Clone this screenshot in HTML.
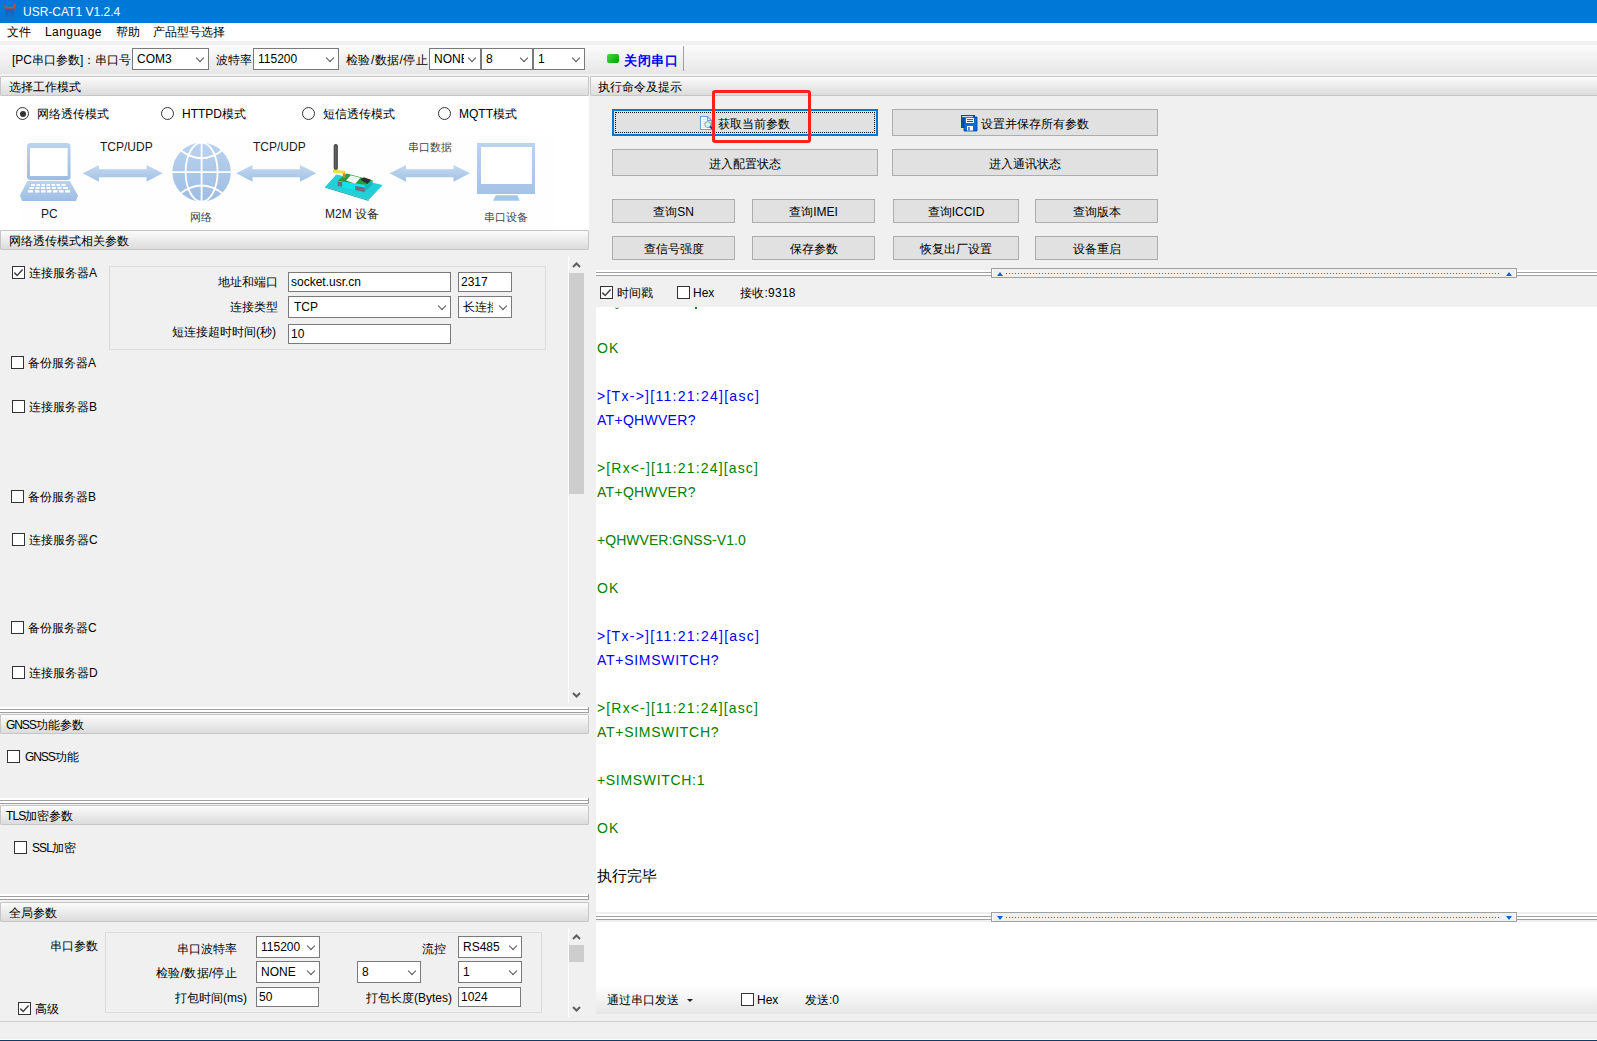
<!DOCTYPE html>
<html><head><meta charset="utf-8">
<style>
*,*::before,*::after{box-sizing:border-box;margin:0;padding:0}
html,body{width:1597px;height:1041px;overflow:hidden;background:#f0f0f0;font-family:"Liberation Sans",sans-serif;font-size:12px;color:#000}
.a{position:absolute}
.t{position:absolute;white-space:nowrap;line-height:1}
.hdr{position:absolute;height:20px;border:1px solid #c6c6c6;border-radius:1px;background:linear-gradient(#fbfbfb,#dcdcdc)}
.hdr span{position:absolute;top:3px;white-space:nowrap;line-height:14px}
.cb{position:absolute;width:13px;height:13px;border:1px solid #333;background:#fff}
.cb svg{position:absolute;left:0;top:0}
.rd{position:absolute;width:13px;height:13px;border:1px solid #333;border-radius:50%;background:#fff}
.rd.on::after{content:"";position:absolute;left:2.5px;top:2.5px;width:6px;height:6px;border-radius:50%;background:#333}
.cmb{position:absolute;border:1px solid #7a7a7a;background:#fff;height:22px}
.cmb span{position:absolute;left:4px;top:4px;line-height:13px;white-space:nowrap}
.cmb i{position:absolute;right:5px;top:6px;width:6px;height:6px;border:solid #555;border-width:0 1px 1px 0;transform:rotate(45deg)}
.ed{position:absolute;border:1px solid #7a7a7a;background:#fff;height:20px}
.ed span{position:absolute;left:2px;top:3px;line-height:13px;white-space:nowrap}
.btn{position:absolute;background:#e1e1e1;border:1px solid #adadad;text-align:center}
.btn span{position:absolute;left:0;right:0;top:50%;margin-top:-6px;line-height:14px;white-space:nowrap}
.spl{position:absolute;height:6px;background:#fff}
.spl::before{content:"";position:absolute;left:0;right:0;top:2px;height:4px;border-top:1px solid #a0a0a0;border-bottom:1px solid #a0a0a0}
.sbox{position:absolute;height:10px;border:1px solid #a0a0a0;background:#f0f0f0;box-shadow:inset 1px 0 0 #fff,inset -1px 0 0 #fff}
.sbox b{position:absolute;left:14px;right:17px;top:4px;height:1px;background:linear-gradient(90deg,#0a78d7 1px,transparent 1px) 0 0/3px 1px repeat-x}
.sarr{position:absolute;width:0;height:0;border-left:3px solid transparent;border-right:3px solid transparent}
.sarr.up{border-bottom:4px solid #0a64d0}.sarr.dn{border-top:4px solid #0a64d0}
.rx{position:absolute;font-size:14px;line-height:16px;white-space:nowrap}
.bl{color:#0000ff}.gr{color:#008000}
</style></head><body>
<!-- title bar -->
<div class="a" style="left:0;top:0;width:1597px;height:23px;background:#0078d7"></div>
<div class="t" style="left:23px;top:6px;color:#fff;font-size:12px">USR-CAT1 V1.2.4</div>
<svg class="a" style="left:0;top:0" width="20" height="22"><path d="M4.3 4.3 L5.5 4.3 L6 6.8 L13.5 6.8 L14 4.3 L15.7 4.3 L15 8.8 L5 8.8 Z" fill="#d94530"/><path d="M5 8.8 L15 8.8 L13.5 17 L12 17 L11.5 12 L10.7 12 L10.3 17 L9.3 17 L9 12 L8.3 12 L8 17 L6.5 17 Z" fill="#2a5db0" opacity="0.85"/></svg>
<!-- menu bar -->
<div class="a" style="left:0;top:23px;width:1597px;height:18px;background:#fff"></div>
<div class="t" style="left:7px;top:26px">文件</div>
<div class="t" style="left:45px;top:26px;letter-spacing:0.45px">Language</div>
<div class="t" style="left:116px;top:26px">帮助</div>
<div class="t" style="left:153px;top:26px">产品型号选择</div>
<!-- toolbar -->
<div class="a" style="left:0;top:45px;width:1597px;height:29px;background:linear-gradient(#fcfcfc,#e6e6e6)"></div>
<div class="a" style="left:0;top:74px;width:1597px;height:2px;background:#f2f2f2"></div>


<div class="t" style="left:12px;top:54px">[PC串口参数]：串口号</div>
<div class="cmb" style="left:132px;top:48px;width:77px"><span>COM3</span><i></i></div>
<div class="t" style="left:216px;top:54px">波特率</div>
<div class="cmb" style="left:253px;top:48px;width:86px"><span>115200</span><i></i></div>
<div class="t" style="left:346px;top:54px;letter-spacing:0.45px">检验/数据/停止</div>
<div class="cmb" style="left:429px;top:48px;width:52px"><span style="width:30px;overflow:hidden">NONE</span><i></i></div>
<div class="cmb" style="left:481px;top:48px;width:52px"><span>8</span><i></i></div>
<div class="cmb" style="left:533px;top:48px;width:52px"><span>1</span><i></i></div>
<div class="a" style="left:607px;top:54px;width:12px;height:9px;border-radius:2px;background:linear-gradient(135deg,#40e040,#00a000)"></div>
<div class="t" style="left:624px;top:54px;color:#0000ff;font-weight:bold;font-size:13px;letter-spacing:0.6px">关闭串口</div>
<div class="a" style="left:683px;top:46px;width:1px;height:25px;background:#a0a0a0"></div>

<!-- LEFT PANEL -->
<div class="hdr" style="left:0px;top:76px;width:589px"><span style="left:8px">选择工作模式</span></div>
<div class="a" style="left:0;top:96px;width:589px;height:134px;background:#fff"></div>
<div class="rd on" style="left:16px;top:107px"></div><div class="t" style="left:37px;top:108px">网络透传模式</div>
<div class="rd" style="left:161px;top:107px"></div><div class="t" style="left:182px;top:108px">HTTPD模式</div>
<div class="rd" style="left:302px;top:107px"></div><div class="t" style="left:323px;top:108px">短信透传模式</div>
<div class="rd" style="left:438px;top:107px"></div><div class="t" style="left:459px;top:108px">MQTT模式</div>


<svg class="a" style="left:0;top:96px" width="588" height="134" viewBox="0 96 588 134">
<defs>
<linearGradient id="bg1" x1="0" y1="0" x2="0" y2="1"><stop offset="0" stop-color="#bad3ee"/><stop offset="1" stop-color="#9dbde3"/></linearGradient>
<linearGradient id="bga" x1="0" y1="0" x2="0" y2="1"><stop offset="0" stop-color="#c2d8f0"/><stop offset="1" stop-color="#a3c2e6"/></linearGradient>
</defs>
<rect x="20" y="136" width="534" height="94" fill="#fefefe"/>
<!-- laptop -->
<rect x="27" y="143" width="43.5" height="37" rx="3.5" fill="url(#bg1)"/>
<rect x="30" y="148" width="37.6" height="28" fill="#fff"/>
<path d="M27.4 181 L69.9 181 L78 195.5 L76 201 L22.2 201 L19.9 195.5 Z" fill="url(#bg1)"/>
<rect x="37" y="180.2" width="23" height="1" fill="#e8f0fa"/>
<g fill="#fff">
<rect x="31" y="184" width="4" height="2"/><rect x="36.5" y="184" width="3.5" height="2"/><rect x="41.5" y="184" width="3.5" height="2"/><rect x="46.5" y="184" width="3.5" height="2"/><rect x="51.5" y="184" width="3.5" height="2"/><rect x="56.5" y="184" width="3.5" height="2"/><rect x="61.5" y="184" width="4" height="2"/>
<rect x="29.5" y="187" width="4.5" height="2"/><rect x="35.5" y="187" width="4" height="2"/><rect x="41" y="187" width="4" height="2"/><rect x="46.5" y="187" width="4" height="2"/><rect x="52" y="187" width="4" height="2"/><rect x="57.5" y="187" width="4" height="2"/><rect x="63" y="187" width="5" height="2"/>
<rect x="28" y="190.2" width="5" height="2.3"/><rect x="35" y="190.2" width="4.5" height="2.3"/><rect x="41" y="190.2" width="4.5" height="2.3"/><rect x="47" y="190.2" width="4.5" height="2.3"/><rect x="53" y="190.2" width="4.5" height="2.3"/><rect x="59" y="190.2" width="4.5" height="2.3"/><rect x="65" y="190.2" width="5" height="2.3"/>
</g>
<!-- arrows -->
<path id="arr" d="M82.7 173.3 L99 165 L99 169.2 L146.5 169.2 L146.5 165 L162.6 173.3 L146.5 181.7 L146.5 177.2 L99 177.2 L99 181.7 Z" fill="url(#bga)"/>
<path d="M236.2 173.3 L252.5 165 L252.5 169.2 L300 169.2 L300 165 L316.3 173.3 L300 181.7 L300 177.2 L252.5 177.2 L252.5 181.7 Z" fill="url(#bga)"/>
<path d="M389.6 173.3 L406 165 L406 169.2 L453.5 169.2 L453.5 165 L470 173.3 L453.5 181.7 L453.5 177.2 L406 177.2 L406 181.7 Z" fill="url(#bga)"/>
<!-- globe -->
<circle cx="201.6" cy="172.1" r="29.3" fill="url(#bg1)"/>
<g stroke="#fff" stroke-width="1.8" fill="none">
<line x1="201.6" y1="142" x2="201.6" y2="202"/>
<line x1="172" y1="172.1" x2="231.5" y2="172.1"/>
<ellipse cx="201.6" cy="172.1" rx="16" ry="29.5"/>
<path d="M181 150.5 Q201.6 166 222 150.5"/>
<path d="M181 193 Q201.6 178 222 193"/>
</g>
<!-- M2M device -->
<path d="M325.2 186.7 L336.3 174.6 L382.7 185 L368.6 200 Z" fill="#22d0d8"/>
<path d="M325.2 186.7 L368.6 200 L368.6 201 L325.2 187.7 Z" fill="#1aa8b0"/>
<path d="M337.6 181 L365 184.7 L364.7 192.2 L337.6 186 Z" fill="#12e4ee"/>
<path d="M365 184.7 L372.9 180.5 L372.2 185 L364.7 192.2 Z" fill="#16b8c0"/>
<path d="M337.6 181.6 L342.2 182.3 L342.2 186.8 L337.6 186 Z" fill="#6e6e80"/>
<path d="M355.2 186 L364.8 187.4 L364.7 192.2 L355.2 190 Z" fill="#6e6e80"/>
<path d="M337.6 180.8 L346.7 173.6 L372.9 180.5 L365 184.7 Z" fill="#2a9a40"/>
<path d="M346.1 180.5 L350.7 175.2 L360.5 177.8 L355.2 183.7 Z" fill="#f4f4f4"/>
<path d="M360.5 179.8 L363.7 177.2 L370.9 179.8 L367.6 184 Z" fill="#2e2e2e"/>
<rect x="333.7" y="144" width="4.2" height="26" rx="2" fill="#4a4a4a"/>
<rect x="335.2" y="146" width="1.2" height="22" fill="#6a6a6a"/>
<path d="M333 169.4 L345.4 171 L345.4 173.8 L333 172.8 Z" fill="#e8e040"/>
<rect x="342.8" y="173.3" width="2.6" height="4.5" fill="#d08a20"/>
</svg>
<div class="t" style="left:100px;top:141px;font-size:12px;color:#1a1a1a">TCP/UDP</div>
<div class="t" style="left:253px;top:141px;font-size:12px;color:#1a1a1a">TCP/UDP</div>
<div class="t" style="left:408px;top:142px;font-size:11px;color:#444">串口数据</div>
<div class="t" style="left:41px;top:208px;font-size:12px;color:#1a1a1a">PC</div>
<div class="t" style="left:190px;top:212px;font-size:11px;color:#444">网络</div>
<div class="t" style="left:325px;top:208px;font-size:12px;color:#1a1a1a">M2M 设备</div>
<div class="t" style="left:484px;top:212px;font-size:11px;color:#444">串口设备</div>
<!-- monitor -->
<div class="a" style="left:477px;top:143px;width:58px;height:51px;background:linear-gradient(#bad3ee,#a5c3e6)"></div>
<div class="a" style="left:481px;top:147px;width:51px;height:37px;background:#fff"></div>
<svg class="a" style="left:490px;top:194px" width="32" height="8"><path d="M5.8 1.2 L27.4 1.2 L29.7 6.8 L3 6.8 Z" fill="#a9c6e8"/></svg>
<div class="hdr" style="left:0px;top:230px;width:589px"><span style="left:8px">网络透传模式相关参数</span></div>

<div class="cb on" style="left:12px;top:266px"><svg width="11" height="11"><path d="M1.3 5.6 L4.2 8.5 L9.6 2.6" stroke="#444" stroke-width="1.5" fill="none"/></svg></div><div class="t" style="left:29px;top:267px">连接服务器A</div>
<div class="a" style="left:109px;top:266px;width:437px;height:84px;border:1px solid #dcdcdc"></div>
<div class="t" style="left:218px;top:276px">地址和端口</div>
<div class="t" style="left:230px;top:301px">连接类型</div>
<div class="t" style="left:172px;top:326px">短连接超时时间(秒)</div>
<div class="ed" style="left:288px;top:272px;width:163px"><span>socket.usr.cn</span></div>
<div class="ed" style="left:458px;top:272px;width:54px"><span>2317</span></div>
<div class="cmb" style="left:288px;top:296px;width:163px;height:22px"><span style="left:5px">TCP</span><i></i></div>
<div class="cmb" style="left:458px;top:296px;width:54px;height:22px"><span style="left:4px;width:30px;overflow:hidden">长连接</span><i></i></div>
<div class="ed" style="left:288px;top:324px;width:163px"><span>10</span></div>

<div class="cb" style="left:11px;top:356px"></div><div class="t" style="left:28px;top:357px">备份服务器A</div>
<div class="cb" style="left:12px;top:400px"></div><div class="t" style="left:29px;top:401px">连接服务器B</div>
<div class="cb" style="left:11px;top:490px"></div><div class="t" style="left:28px;top:491px">备份服务器B</div>
<div class="cb" style="left:12px;top:533px"></div><div class="t" style="left:29px;top:534px">连接服务器C</div>
<div class="cb" style="left:11px;top:621px"></div><div class="t" style="left:28px;top:622px">备份服务器C</div>
<div class="cb" style="left:12px;top:666px"></div><div class="t" style="left:29px;top:667px">连接服务器D</div>

<!-- left scrollbar -->
<div class="a" style="left:568px;top:256px;width:1px;height:447px;background:#fff"></div>
<div class="a" style="left:569px;top:273px;width:15px;height:221px;background:#cdcdcd"></div>

<div class="spl" style="left:0;top:707px;width:588px"></div><div class="a" style="left:588px;top:707px;width:1px;height:6px;background:#a0a0a0"></div>
<div class="hdr" style="left:0px;top:714px;width:589px"><span style="left:5px"><b style="font-weight:normal;letter-spacing:-1.1px">GNSS</b>功能参数</span></div>
<div class="cb" style="left:7px;top:750px"></div><div class="t" style="left:25px;top:751px"><b style="font-weight:normal;letter-spacing:-1.1px">GNSS</b>功能</div>

<div class="spl" style="left:0;top:798px;width:588px"></div><div class="a" style="left:588px;top:798px;width:1px;height:6px;background:#a0a0a0"></div>
<div class="hdr" style="left:0px;top:805px;width:589px"><span style="left:5px"><b style="font-weight:normal;letter-spacing:-0.9px">TLS</b>加密参数</span></div>
<div class="cb" style="left:14px;top:841px"></div><div class="t" style="left:32px;top:842px"><b style="font-weight:normal;letter-spacing:-0.9px">SSL</b>加密</div>

<div class="spl" style="left:0;top:894px;width:588px"></div><div class="a" style="left:588px;top:894px;width:1px;height:6px;background:#a0a0a0"></div>
<div class="hdr" style="left:0px;top:902px;width:589px"><span style="left:8px">全局参数</span></div>
<div class="t" style="left:50px;top:940px">串口参数</div>
<div class="a" style="left:105px;top:932px;width:437px;height:81px;border:1px solid #dcdcdc"></div>
<div class="t" style="left:177px;top:943px">串口波特率</div>
<div class="t" style="left:156px;top:967px;letter-spacing:0.3px">检验/数据/停止</div>
<div class="t" style="left:175px;top:992px">打包时间(ms)</div>
<div class="t" style="left:422px;top:943px">流控</div>
<div class="t" style="left:366px;top:992px">打包长度(Bytes)</div>
<div class="cmb" style="left:256px;top:936px;width:64px"><span style="width:40px;overflow:hidden">115200</span><i></i></div>
<div class="cmb" style="left:256px;top:961px;width:64px"><span>NONE</span><i></i></div>
<div class="cmb" style="left:357px;top:961px;width:64px"><span>8</span><i></i></div>
<div class="cmb" style="left:458px;top:936px;width:64px"><span>RS485</span><i></i></div>
<div class="cmb" style="left:458px;top:961px;width:64px"><span>1</span><i></i></div>
<div class="ed" style="left:256px;top:987px;width:63px"><span>50</span></div>
<div class="ed" style="left:458px;top:987px;width:63px"><span>1024</span></div>
<div class="cb on" style="left:18px;top:1002px"><svg width="11" height="11"><path d="M1.3 5.6 L4.2 8.5 L9.6 2.6" stroke="#444" stroke-width="1.5" fill="none"/></svg></div><div class="t" style="left:35px;top:1003px">高级</div>
<div class="a" style="left:569px;top:945px;width:15px;height:17px;background:#cdcdcd"></div>
<svg class="a" style="left:572px;top:262px" width="9" height="6"><path d="M1 5 L4.5 1.5 L8 5" fill="none" stroke="#606060" stroke-width="2"/></svg>
<svg class="a" style="left:572px;top:692px" width="9" height="6"><path d="M1 1 L4.5 4.5 L8 1" fill="none" stroke="#606060" stroke-width="2"/></svg>
<div class="a" style="left:568px;top:928px;width:1px;height:89px;background:#fff"></div>
<svg class="a" style="left:572px;top:934px" width="9" height="6"><path d="M1 5 L4.5 1.5 L8 5" fill="none" stroke="#606060" stroke-width="2"/></svg>
<svg class="a" style="left:572px;top:1006px" width="9" height="6"><path d="M1 1 L4.5 4.5 L8 1" fill="none" stroke="#606060" stroke-width="2"/></svg>

<!-- RIGHT PANEL -->
<div class="hdr" style="left:590px;top:76px;width:1012px"><span style="left:7px">执行命令及提示</span></div>
<div class="btn" style="left:612px;top:109px;width:266px;height:27px;border:2px solid #0078d7"><div class="a" style="left:1px;top:1px;right:1px;bottom:1px;border:1px dotted #111"></div><span style="left:104px;right:auto;margin-top:-6px">获取当前参数</span></div>
<svg class="a" style="left:699px;top:115px" width="14" height="16"><path d="M1.5 1.5 H8.5 L12.5 5.5 V14.5 H1.5 Z" fill="#fff" stroke="#6a9fd8" stroke-width="1.1"/><path d="M8.5 1.5 V5.5 H12.5" fill="none" stroke="#6a9fd8" stroke-width="1.1"/><g stroke="#ddd" stroke-width="0.8"><line x1="3.5" y1="4.5" x2="7" y2="4.5"/><line x1="3.5" y1="6.5" x2="7" y2="6.5"/><line x1="3.5" y1="8.5" x2="6" y2="8.5"/><line x1="3.5" y1="10.5" x2="6" y2="10.5"/><line x1="3.5" y1="12.5" x2="6" y2="12.5"/></g><circle cx="8.8" cy="9.6" r="3" fill="#c8fafa" stroke="#777" stroke-width="0.7"/><path d="M11 11.5 L13 13.5" stroke="#0a3aa8" stroke-width="1.8"/></svg>
<div class="btn" style="left:892px;top:109px;width:266px;height:27px"><span style="left:88px;right:auto;margin-top:-6px">设置并保存所有参数</span></div>
<svg class="a" style="left:960px;top:114px" width="18" height="18"><path d="M1 1 H15 V14 H1 Z" fill="#0047b3"/><path d="M4 3 H17 V17 H4 Z" fill="#0a6ad6" stroke="#0040a8" stroke-width="0.8"/><rect x="6" y="4" width="8" height="5" rx="0.8" fill="#fff"/><rect x="7" y="5.2" width="6" height="0.9" fill="#0040a8"/><rect x="7" y="7.1" width="6" height="0.9" fill="#0040a8"/><rect x="7" y="12" width="6" height="4.5" fill="#fff"/><rect x="8.2" y="13" width="1.5" height="3.5" fill="#0a6ad6"/><rect x="2" y="2.2" width="11" height="1" fill="#fff"/></svg>
<div class="btn" style="left:612px;top:149px;width:266px;height:27px"><span>进入配置状态</span></div>
<div class="btn" style="left:892px;top:149px;width:266px;height:27px"><span>进入通讯状态</span></div>
<div class="btn" style="left:612px;top:199px;width:123px;height:24px"><span>查询SN</span></div>
<div class="btn" style="left:752px;top:199px;width:123px;height:24px"><span>查询IMEI</span></div>
<div class="btn" style="left:893px;top:199px;width:126px;height:24px"><span>查询ICCID</span></div>
<div class="btn" style="left:1035px;top:199px;width:123px;height:24px"><span>查询版本</span></div>
<div class="btn" style="left:612px;top:236px;width:123px;height:24px"><span>查信号强度</span></div>
<div class="btn" style="left:752px;top:236px;width:123px;height:24px"><span>保存参数</span></div>
<div class="btn" style="left:893px;top:236px;width:126px;height:24px"><span>恢复出厂设置</span></div>
<div class="btn" style="left:1035px;top:236px;width:123px;height:24px"><span>设备重启</span></div>
<div class="a" style="left:712px;top:90px;width:99px;height:53px;border:3px solid #ff2020;border-radius:3px"></div>

<div class="spl" style="left:596px;top:270px;width:1001px"></div><div class="sbox" style="left:991px;top:268px;width:526px"><i class="sarr up" style="left:5px;top:3px"></i><b></b><i class="sarr up" style="right:4px;top:3px"></i></div>
<div class="cb on" style="left:600px;top:286px"><svg width="11" height="11"><path d="M1.3 5.6 L4.2 8.5 L9.6 2.6" stroke="#444" stroke-width="1.5" fill="none"/></svg></div><div class="t" style="left:617px;top:287px">时间戳</div>
<div class="cb" style="left:677px;top:286px"></div><div class="t" style="left:693px;top:287px">Hex</div>
<div class="t" style="left:740px;top:287px;letter-spacing:0.25px">接收:9318</div>

<div class="a" style="left:596px;top:307px;width:1001px;height:605px;background:#fff;overflow:hidden">
<div class="a" style="left:19px;top:0;width:4px;height:2px;border-bottom:1.5px solid #1a8a1a;border-radius:0 0 3px 3px"></div><div class="a" style="left:99px;top:0;width:1.5px;height:2px;background:#1a8a1a"></div>
<div class="rx gr" style="left:1px;top:33px;letter-spacing:1px">OK</div>
<div class="rx bl" style="left:1px;top:81px;letter-spacing:1.27px">&gt;[Tx-&gt;][11:21:24][asc]</div>
<div class="rx bl" style="left:1px;top:105px;letter-spacing:0.29px">AT+QHWVER?</div>
<div class="rx gr" style="left:1px;top:153px;letter-spacing:1.15px">&gt;[Rx&lt;-][11:21:24][asc]</div>
<div class="rx gr" style="left:1px;top:177px;letter-spacing:0.29px">AT+QHWVER?</div>
<div class="rx gr" style="left:1px;top:225px;letter-spacing:0.03px">+QHWVER:GNSS-V1.0</div>
<div class="rx gr" style="left:1px;top:273px;letter-spacing:1px">OK</div>
<div class="rx bl" style="left:1px;top:321px;letter-spacing:1.27px">&gt;[Tx-&gt;][11:21:24][asc]</div>
<div class="rx bl" style="left:1px;top:345px;letter-spacing:0.72px">AT+SIMSWITCH?</div>
<div class="rx gr" style="left:1px;top:393px;letter-spacing:1.15px">&gt;[Rx&lt;-][11:21:24][asc]</div>
<div class="rx gr" style="left:1px;top:417px;letter-spacing:0.72px">AT+SIMSWITCH?</div>
<div class="rx gr" style="left:1px;top:465px;letter-spacing:0.68px">+SIMSWITCH:1</div>
<div class="rx gr" style="left:1px;top:513px;letter-spacing:1px">OK</div>
<div class="rx" style="left:1px;top:561px;font-size:14.5px">执行完毕</div>
</div>

<div class="a" style="left:596px;top:912px;width:1001px;height:10px;background:#f0f0f0"></div><div class="spl" style="left:596px;top:914px;width:1001px"></div><div class="sbox" style="left:991px;top:912px;width:526px"><i class="sarr dn" style="left:5px;top:3px"></i><b style="top:4px"></b><i class="sarr dn" style="right:4px;top:3px"></i></div>
<div class="a" style="left:596px;top:922px;width:1001px;height:63px;background:#fff"></div>
<div class="a" style="left:596px;top:985px;width:1001px;height:29px;background:linear-gradient(#fff,#e6e6e6)"></div>
<div class="t" style="left:607px;top:994px">通过串口发送</div>
<div class="a" style="left:687px;top:999px;width:0;height:0;border-left:3px solid transparent;border-right:3px solid transparent;border-top:3px solid #222"></div>
<div class="cb" style="left:741px;top:993px"></div><div class="t" style="left:757px;top:994px">Hex</div>
<div class="t" style="left:805px;top:994px">发送:0</div>

<!-- status bar -->
<div class="a" style="left:0;top:1021px;width:1597px;height:1px;background:#d0d0d0"></div>
<div class="a" style="left:0;top:1039px;width:1597px;height:1px;background:#fff"></div><div class="a" style="left:0;top:1040px;width:1597px;height:1px;background:#0f3a6a"></div>
</body></html>
